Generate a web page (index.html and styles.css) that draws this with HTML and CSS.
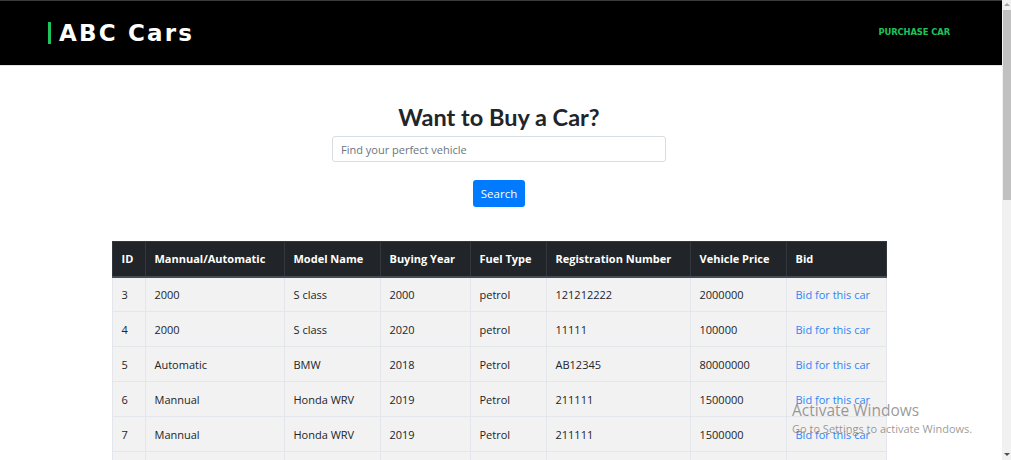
FILE: index.html
```html
<!DOCTYPE html>
<html lang="en">
<head>
<meta charset="utf-8">
<title>ABC Cars</title>
<link rel="stylesheet" href="styles.css">
</head>
<body>
<div class="viewport">
  <div class="page">
    <header class="header">
      <a class="logo" href="#">ABC Cars</a>
      <nav><a class="nav-link" href="#">PURCHASE CAR</a></nav>
    </header>
    <main class="main">
      <h2 class="title">Want to Buy a Car?</h2>
      <form class="search">
        <input class="search-input" type="text" placeholder="Find your perfect vehicle">
        <button class="btn" type="button">Search</button>
      </form>
      <table class="cars">
        <colgroup>
          <col style="width:33px"><col style="width:139px"><col style="width:96px"><col style="width:90px"><col style="width:76px"><col style="width:144px"><col style="width:96px"><col style="width:100px">
        </colgroup>
        <thead>
          <tr><th>ID</th><th>Mannual/Automatic</th><th>Model Name</th><th>Buying Year</th><th>Fuel Type</th><th>Registration Number</th><th>Vehicle Price</th><th>Bid</th></tr>
        </thead>
        <tbody>
          <tr><td>3</td><td>2000</td><td>S class</td><td>2000</td><td>petrol</td><td>121212222</td><td>2000000</td><td><a href="#">Bid for this car</a></td></tr>
          <tr><td>4</td><td>2000</td><td>S class</td><td>2020</td><td>petrol</td><td>11111</td><td>100000</td><td><a href="#">Bid for this car</a></td></tr>
          <tr><td>5</td><td>Automatic</td><td>BMW</td><td>2018</td><td>Petrol</td><td>AB12345</td><td>80000000</td><td><a href="#">Bid for this car</a></td></tr>
          <tr><td>6</td><td>Mannual</td><td>Honda WRV</td><td>2019</td><td>Petrol</td><td>211111</td><td>1500000</td><td><a href="#">Bid for this car</a></td></tr>
          <tr><td>7</td><td>Mannual</td><td>Honda WRV</td><td>2019</td><td>Petrol</td><td>211111</td><td>1500000</td><td><a href="#">Bid for this car</a></td></tr>
          <tr><td>8</td><td>Mannual</td><td>Honda WRV</td><td>2019</td><td>Petrol</td><td>211111</td><td>1500000</td><td><a href="#">Bid for this car</a></td></tr>
        </tbody>
      </table>
    </main>
    <div class="watermark">
      <div class="wm-title">Activate Windows</div>
      <div class="wm-sub">Go to Settings to activate Windows.</div>
    </div>
  </div>
  <div class="scrollbar">
    <span class="arrow up"></span>
    <div class="thumb"></div>
    <span class="arrow down"></span>
  </div>
</div>
</body>
</html>
```

FILE: styles.css
```css
* { box-sizing: border-box; }
html, body { margin: 0; padding: 0; background: #fff; }
body { font-family: "Open Sans", "Noto Sans", sans-serif; color: #212529; }

.viewport { display: flex; height: 460px; overflow: hidden; }
.page { flex: 1; position: relative; overflow: hidden; }

.header {
  height: 66px;
  background: #000;
  border-top: 1px solid #3a3a3a;
  border-bottom: 1px solid #e5e5e5;
  display: flex;
  align-items: center;
  justify-content: space-between;
  padding: 0 52px 0 48px;
}
.logo {
  color: #fff;
  text-decoration: none;
  font-family: "DejaVu Sans", sans-serif;
  font-weight: bold;
  font-size: 23px;
  letter-spacing: 2.2px;
  line-height: 22px;
  border-left: 3px solid #1fc35c;
  padding-left: 8px;
}
.nav-link {
  display: block;
  margin-bottom: 2px;
  color: #1fc35c;
  text-decoration: none;
  font-family: "DejaVu Sans", sans-serif;
  font-weight: bold;
  font-size: 8.4px;
  letter-spacing: -0.1px;
}

.main {
  display: flex;
  flex-direction: column;
  align-items: center;
  padding: 0 4px 0 0;
}
.title {
  margin: 35px 0 3px;
  font-family: "Lato", sans-serif;
  font-size: 23.5px;
  font-weight: 700;
  line-height: 32px;
  color: #212529;
}
.search { display: flex; flex-direction: column; align-items: center; }
.search-input {
  width: 334px;
  height: 26px;
  border: 1px solid #d8dde2;
  border-radius: 3px;
  padding: 0 8px;
  font-family: inherit;
  font-size: 11px;
  color: #495057;
}
.search-input::placeholder { color: #6c757d; }
.btn {
  margin-top: 18px;
  width: 52px;
  height: 27px;
  background: #007bff;
  color: #fff;
  border: 0;
  border-radius: 3px;
  font-family: inherit;
  font-size: 11.5px;
  padding: 0;
}

.cars {
  margin-top: 34px;
  width: 774px;
  table-layout: fixed;
  border-collapse: collapse;
  font-size: 11px;
}
.cars th {
  background: #212529;
  color: #fff;
  font-weight: 700;
  text-align: left;
  height: 35px;
  padding: 0 9px;
  border: 1px solid #32383e;
  border-bottom: 2px solid #454d55;
  white-space: nowrap;
}
.cars td {
  background: #f2f2f2;
  height: 35px;
  padding: 0 9px;
  border: 1px solid #e3e6ea;
  white-space: nowrap;
}
.cars a { color: #2f86f6; text-decoration: none; }

.watermark {
  position: absolute;
  left: 792px;
  top: 401px;
  color: rgba(120, 120, 120, 0.75);
  pointer-events: none;
}
.wm-title { font-size: 15.5px; line-height: 18px; }
.wm-sub { font-size: 11px; line-height: 18px; margin-top: 1px; }

.scrollbar {
  width: 9px;
  background: #f1f1f1;
  display: flex;
  flex-direction: column;
  align-items: center;
  position: relative;
}
.thumb {
  width: 8px;
  height: 190px;
  background: #c1c1c1;
  margin-top: 4px;
}
.arrow { width: 0; height: 0; border-left: 3px solid transparent; border-right: 3px solid transparent; margin-top: 3px; }
.arrow.up { border-bottom: 3px solid #a3a3a3; }
.arrow.down { border-top: 3px solid #505050; margin-top: auto; margin-bottom: 4px; }
```
